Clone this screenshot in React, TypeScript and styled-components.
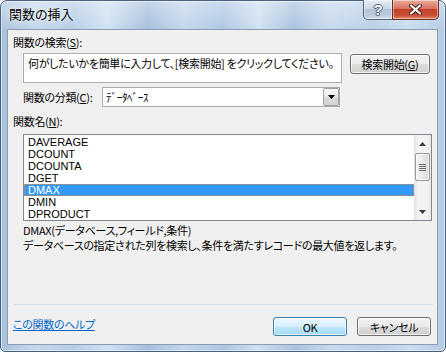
import styled, { createGlobalStyle } from 'styled-components';

const GlobalStyle = createGlobalStyle`
  html, body {
    margin: 0;
    padding: 0;
  }
  body {
    width: 446px;
    height: 352px;
    overflow: hidden;
    background: #ffffff;
    font-family: "Noto Sans CJK JP", "Noto Sans", sans-serif;
    font-feature-settings: "palt";
    font-size: 11px;
    letter-spacing: -0.3px;
    color: #000;
  }
`;

const FUNCTIONS = ['DAVERAGE', 'DCOUNT', 'DCOUNTA', 'DGET', 'DMAX', 'DMIN', 'DPRODUCT'];
const SELECTED = 'DMAX';

function App() {
  return (
    <>
      <GlobalStyle />
      <Window>
        <TitleBar>
          <Title>関数の挿入</Title>
          <CaptionButtons>
            <HelpCaption>?</HelpCaption>
            <CloseCaption>
              <svg width="13" height="11" viewBox="0 0 13 11">
                <path d="M2 1.5 L11 9.5 M11 1.5 L2 9.5" stroke="#3d1c1c" strokeWidth="4" strokeLinecap="round" />
                <path d="M2 1.5 L11 9.5 M11 1.5 L2 9.5" stroke="#ffffff" strokeWidth="2.2" strokeLinecap="round" />
              </svg>
            </CloseCaption>
          </CaptionButtons>
        </TitleBar>
        <Client>
          <SectionLabel>
            関数の検索(<u>S</u>):
          </SectionLabel>
          <SearchRow>
            <SearchBox>何がしたいかを簡単に入力して、[検索開始] をクリックしてください。</SearchBox>
            <SearchButton>
              検索開始(<u>G</u>)
            </SearchButton>
          </SearchRow>
          <CategoryRow>
            <CategoryLabel>
              関数の分類(<u>C</u>):
            </CategoryLabel>
            <Select>
              <SelectValue>ﾃﾞｰﾀﾍﾞｰｽ</SelectValue>
              <SelectArrow>
                <svg width="7" height="4" viewBox="0 0 7 4">
                  <polygon points="0,0 7,0 3.5,4" fill="#000" />
                </svg>
              </SelectArrow>
            </Select>
          </CategoryRow>
          <NameLabel>
            関数名(<u>N</u>):
          </NameLabel>
          <ListBox>
            <Rows>
              {FUNCTIONS.map((name) => (
                <Row key={name} $selected={name === SELECTED}>
                  {name}
                </Row>
              ))}
            </Rows>
            <ScrollBar>
              <ScrollArrow>
                <svg width="7" height="4" viewBox="0 0 7 4">
                  <polygon points="3.5,0 7,4 0,4" fill="#3a3a3a" />
                </svg>
              </ScrollArrow>
              <Thumb>
                <svg width="7" height="7" viewBox="0 0 7 7">
                  <path d="M0 0.5 H7 M0 2.5 H7 M0 4.5 H7 M0 6.5 H7" stroke="#6a6a6a" strokeWidth="1" />
                </svg>
              </Thumb>
              <Track />
              <ScrollArrow>
                <svg width="7" height="4" viewBox="0 0 7 4">
                  <polygon points="0,0 7,0 3.5,4" fill="#3a3a3a" />
                </svg>
              </ScrollArrow>
            </ScrollBar>
          </ListBox>
          <Description>
            <DescLine>DMAX(データベース,フィールド,条件)</DescLine>
            <DescLine>データベースの指定された列を検索し、条件を満たすレコードの最大値を返します。</DescLine>
          </Description>
          <Separator />
          <Footer>
            <HelpLink>この関数のヘルプ</HelpLink>
            <Buttons>
              <DialogButton $default>OK</DialogButton>
              <DialogButton>キャンセル</DialogButton>
            </Buttons>
          </Footer>
        </Client>
      </Window>
    </>
  );
}

export default App;

const Window = styled.div`
  box-sizing: border-box;
  width: 446px;
  height: 352px;
  display: flex;
  flex-direction: column;
  padding: 0 7px 6px 6px;
  border: 1px solid #4a6282;
  border-radius: 7px 7px 5px 5px;
  box-shadow: inset 0 0 0 1px rgba(255, 255, 255, 0.55);
  background:
    linear-gradient(180deg, rgba(255, 255, 255, 0.35) 0px, rgba(255, 255, 255, 0) 30px),
    linear-gradient(
      90deg,
      #a9c3de 0%,
      #c4d8ec 8%,
      #b6cde6 16%,
      #d0e1f2 24%,
      #a4bfdc 33%,
      #c2d6eb 41%,
      #adc7e2 50%,
      #cfe0f1 58%,
      #a8c2de 66%,
      #c6d9ed 74%,
      #b8cee6 84%,
      #cbdcef 92%,
      #b4cbe4 100%
    );
`;

const TitleBar = styled.div`
  display: flex;
  align-items: flex-start;
  flex: none;
  height: 28px;
  margin-right: -1px;
`;

const Title = styled.div`
  flex: 1;
  padding: 5px 0 0 2px;
  font-size: 13px;
  letter-spacing: 0;
  line-height: 16px;
  text-shadow: 0 0 6px rgba(255, 255, 255, 0.95), 0 0 2px rgba(255, 255, 255, 0.9);
`;

const CaptionButtons = styled.div`
  display: flex;
  margin-top: -1px;
`;

const CaptionButton = styled.div`
  box-sizing: border-box;
  height: 20px;
  display: flex;
  align-items: center;
  justify-content: center;
  border: 1px solid rgba(40, 55, 80, 0.75);
  border-top: none;
  box-shadow: inset 0 0 0 1px rgba(255, 255, 255, 0.45);
`;

const HelpCaption = styled(CaptionButton)`
  width: 29px;
  border-right: none;
  border-bottom-left-radius: 5px;
  background: linear-gradient(180deg, #e6edf5 0%, #cbd8e6 45%, #b2c3d5 50%, #bccbdc 80%, #d2dfec 100%);
  color: #fff;
  font-family: "Liberation Sans", Arial, sans-serif;
  font-weight: bold;
  font-size: 15px;
  letter-spacing: 0;
  text-shadow: -1px 0 #44566e, 1px 0 #44566e, 0 -1px #44566e, 0 1px #44566e;
`;

const CloseCaption = styled(CaptionButton)`
  width: 47px;
  border-color: #6b2d22;
  border-bottom-right-radius: 5px;
  background: linear-gradient(180deg, #eaab9c 0%, #d8725d 45%, #c3402a 50%, #c84e33 80%, #e0876a 100%);
`;

const Client = styled.div`
  flex: 1;
  display: flex;
  flex-direction: column;
  min-height: 0;
  border: 1px solid #8a9db4;
  background: #f0f0f0;
`;

const SectionLabel = styled.div`
  margin: 5px 0 0 5px;
  line-height: 15px;
`;

const SearchRow = styled.div`
  display: flex;
  align-items: flex-start;
  gap: 8px;
  margin: 3px 0 0 15px;
`;

const SearchBox = styled.div`
  box-sizing: border-box;
  width: 319px;
  height: 30px;
  padding: 2px 4px 0;
  line-height: 14px;
  white-space: nowrap;
  overflow: hidden;
  background: #fff;
  border: 1px solid #a9adb5;
`;

const PushButton = styled.div`
  box-sizing: border-box;
  display: flex;
  align-items: center;
  justify-content: center;
  border: 1px solid #707070;
  border-radius: 3px;
  background: linear-gradient(180deg, #f2f2f2 0%, #ebebeb 50%, #dddddd 50%, #cfcfcf 100%);
  box-shadow: inset 0 0 0 1px rgba(255, 255, 255, 0.7);
  line-height: 14px;
`;

const SearchButton = styled(PushButton)`
  width: 80px;
  height: 20px;
  margin-top: 1px;
`;

const CategoryRow = styled.div`
  display: flex;
  align-items: center;
  height: 20px;
  margin: 4px 0 0 15px;
`;

const CategoryLabel = styled.div`
  width: 79px;
  line-height: 15px;
`;

const Select = styled.div`
  box-sizing: border-box;
  width: 238px;
  height: 20px;
  display: flex;
  align-items: center;
  background: #fff;
  border: 1px solid #a5acb5;
`;

const SelectValue = styled.div`
  flex: 1;
  padding-left: 3px;
  line-height: 14px;
`;

const SelectArrow = styled.div`
  box-sizing: border-box;
  width: 16px;
  height: 18px;
  display: flex;
  align-items: center;
  justify-content: center;
  border: 1px solid #a0a0a0;
  border-radius: 2px;
  background: linear-gradient(180deg, #f6f6f6 0%, #e8e8e8 50%, #dcdcdc 51%, #d4d4d4 100%);
`;

const NameLabel = styled(SectionLabel)`
  margin-top: 7px;
`;

const ListBox = styled.div`
  box-sizing: border-box;
  width: 409px;
  height: 87px;
  flex: none;
  display: flex;
  margin: 5px 0 0 15px;
  border: 1px solid #828790;
  background: #fff;
`;

const Rows = styled.div`
  flex: 1;
  padding-top: 1px;
`;

const Row = styled.div<{ $selected?: boolean }>`
  height: 12px;
  padding-left: 4px;
  font-family: "Liberation Sans", Arial, sans-serif;
  font-size: 11px;
  letter-spacing: 0;
  line-height: 12px;
  color: ${({ $selected }) => ($selected ? '#fff' : '#000')};
  background: ${({ $selected }) => ($selected ? '#3399ff' : 'transparent')};
  outline: ${({ $selected }) => ($selected ? '1px dotted #d9883a' : 'none')};
  outline-offset: -1px;
`;

const ScrollBar = styled.div`
  width: 17px;
  display: flex;
  flex-direction: column;
  background: linear-gradient(90deg, #e2e2e2 0%, #f3f3f3 25%, #f3f3f3 75%, #e9e9e9 100%);
`;

const ScrollArrow = styled.div`
  height: 17px;
  display: flex;
  align-items: center;
  justify-content: center;
`;

const Thumb = styled.div`
  box-sizing: border-box;
  height: 28px;
  margin: 1px 1px 0;
  display: flex;
  align-items: center;
  justify-content: center;
  border: 1px solid #979797;
  border-radius: 2px;
  background: linear-gradient(90deg, #f4f4f4 0%, #e9e9e9 50%, #d8d8d8 100%);
  box-shadow: inset 0 0 0 1px rgba(255, 255, 255, 0.7);
`;

const Track = styled.div`
  flex: 1;
`;

const Description = styled.div`
  margin: 2px 0 0 15px;
`;

const DescLine = styled.div`
  line-height: 15px;
  white-space: nowrap;
`;

const Separator = styled.div`
  margin: 51px 4px 0 5px;
  border-top: 1px solid #d5dfe5;
`;

const Footer = styled.div`
  display: flex;
  align-items: flex-start;
  margin: 12px 6px 0 5px;
`;

const HelpLink = styled.a`
  flex: 1;
  margin-top: 0;
  line-height: 14px;
  color: #0066cc;
  text-decoration: underline;
  cursor: pointer;
`;

const Buttons = styled.div`
  display: flex;
  gap: 10px;
`;

const DialogButton = styled(PushButton)<{ $default?: boolean }>`
  width: 74px;
  height: 19px;
  border-color: ${({ $default }) => ($default ? '#3c7fb1' : '#707070')};
  background: ${({ $default }) =>
    $default
      ? 'linear-gradient(180deg, #eaf6fd 0%, #d9f0fc 50%, #bee6fd 50%, #a7d9f5 100%)'
      : 'linear-gradient(180deg, #f2f2f2 0%, #ebebeb 50%, #dddddd 50%, #cfcfcf 100%)'};
`;
